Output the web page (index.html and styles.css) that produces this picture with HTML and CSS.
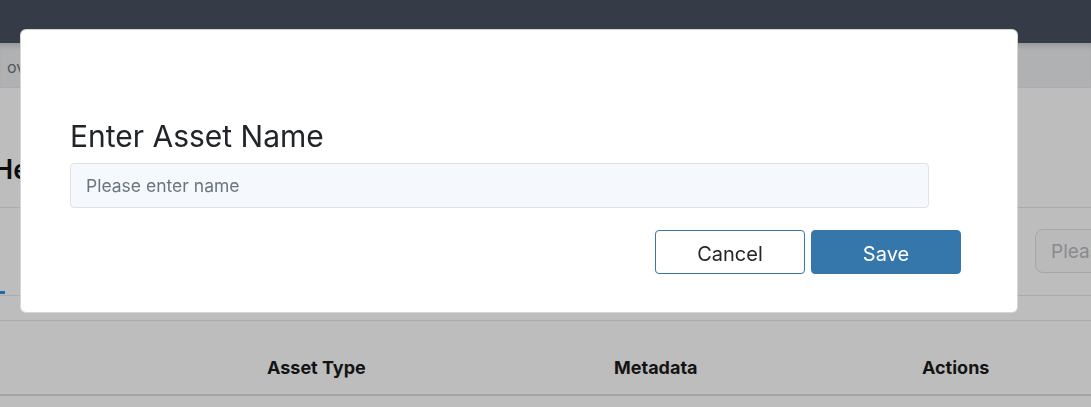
FILE: index.html
```html
<!DOCTYPE html>
<html lang="en">
<head>
<meta charset="utf-8">
<title>Enter Asset Name</title>
<link rel="stylesheet" href="styles.css">
</head>
<body>
<div class="page">
  <header class="navbar"></header>
  <nav class="crumbs"><span class="crumb">overview</span></nav>
  <main class="content">
    <h1 class="page-title">Heritage Assets</h1>
    <div class="toolbar">
      <div class="tabs"><span class="tab-bar"></span></div>
      <div class="search"><input class="search-input" type="text" placeholder="Please search" disabled></div>
    </div>
    <div class="spacer"></div>
    <div class="table-head">
      <div class="th th-name"></div>
      <div class="th th-type">Asset Type</div>
      <div class="th th-meta">Metadata</div>
      <div class="th th-actions">Actions</div>
    </div>
  </main>
</div>

<div class="backdrop">
  <div class="modal">
    <h2 class="modal-title">Enter Asset Name</h2>
    <input class="name-input" type="text" placeholder="Please enter name">
    <div class="modal-actions">
      <button class="btn btn-outline" type="button">Cancel</button>
      <button class="btn btn-primary" type="button">Save</button>
    </div>
  </div>
</div>
</body>
</html>
```

FILE: styles.css
```css
* { box-sizing: border-box; }

html, body {
  margin: 0;
  padding: 0;
  width: 1091px;
  height: 407px;
  overflow: hidden;
  background: #ffffff;
  font-family: Inter, "Noto Sans", sans-serif;
  color: #212529;
}

.page {
  width: 1091px;
  overflow: hidden;
}

.navbar {
  height: 43px;
  background: #4a5160;
}

.crumbs {
  height: 45px;
  background: #eeeff2;
  box-shadow: inset 0 6px 6px -4px rgba(0,0,0,0.18);
  display: flex;
  align-items: center;
  padding-left: 7px;
  padding-top: 4px;
  border-bottom: 1px solid #e8e9ec;
}

.crumb {
  font-size: 16px;
  color: #6c757d;
}

.content {
  display: flex;
  flex-direction: column;
}

.page-title {
  margin: 0;
  height: 120px;
  display: flex;
  align-items: center;
  padding-top: 44px;
  font-size: 27px;
  font-weight: 600;
  color: #111;
  border-bottom: 1px solid #e6e7ea;
  text-indent: -7px;
  white-space: nowrap;
}

.toolbar {
  height: 88px;
  display: flex;
  justify-content: space-between;
  align-items: flex-end;
  border-bottom: 1px solid #e6e7ea;
}

.tabs {
  display: flex;
  align-items: flex-end;
}

.tab-bar {
  display: block;
  width: 5px;
  height: 3px;
  margin-bottom: 1px;
  background: #2b8fea;
}

.search {
  align-self: flex-start;
  padding-top: 21px;
  width: 56px;
  overflow: hidden;
}

.search-input {
  width: 120px;
  height: 44px;
  border: 1px solid #dfe1e5;
  border-radius: 8px;
  padding: 0 15px;
  background: #fbfbfc;
  font-family: Inter, sans-serif;
  font-size: 19px;
}

.search-input::placeholder { color: #b8bcc2; }

.spacer {
  height: 25px;
  border-bottom: 1px solid #e6e7ea;
}

.table-head {
  height: 75px;
  display: grid;
  grid-template-columns: 267px 347px 308px 1fr;
  align-items: center;
  padding-top: 20px;
  border-bottom: 2px solid #dcdee1;
}

.th {
  font-family: Inter, sans-serif;
  font-size: 18px;
  font-weight: 700;
  color: #1c1c1c;
}

/* modal overlay */
.backdrop {
  position: fixed;
  inset: 0;
  background: rgba(0,0,0,0.26);
}

.modal {
  position: absolute;
  left: 20px;
  top: 29px;
  width: 998px;
  height: 284px;
  background: #ffffff;
  border-radius: 6px;
  border: 1px solid rgba(0,0,0,0.16);
  padding: 88px 56px 0 49px;
  display: flex;
  flex-direction: column;
}

.modal-title {
  margin: 0;
  font-size: 30px;
  font-weight: 400;
  line-height: 36px;
  height: 36px;
  color: #212529;
}

.name-input {
  margin-top: 9px;
  width: 859px;
  height: 45px;
  border: 1px solid #dee2e6;
  border-radius: 4px;
  background: #f5f9fd;
  padding: 0 15px;
  font-family: Inter, sans-serif;
  font-size: 17.5px;
  color: #212529;
  outline: none;
}

.name-input::placeholder { color: #6c757d; }

.modal-actions {
  margin-top: 22px;
  display: flex;
  justify-content: flex-end;
  gap: 6px;
}

.btn {
  width: 150px;
  height: 44px;
  border-radius: 4px;
  padding: 4px 0 0;
  font-family: Inter, sans-serif;
  font-size: 20px;
  font-weight: 400;
  cursor: pointer;
}

.btn-outline {
  background: #ffffff;
  border: 1px solid #3677ab;
  color: #212529;
}

.btn-primary {
  background: #3677ab;
  border: 1px solid #3677ab;
  color: #ffffff;
}
```
